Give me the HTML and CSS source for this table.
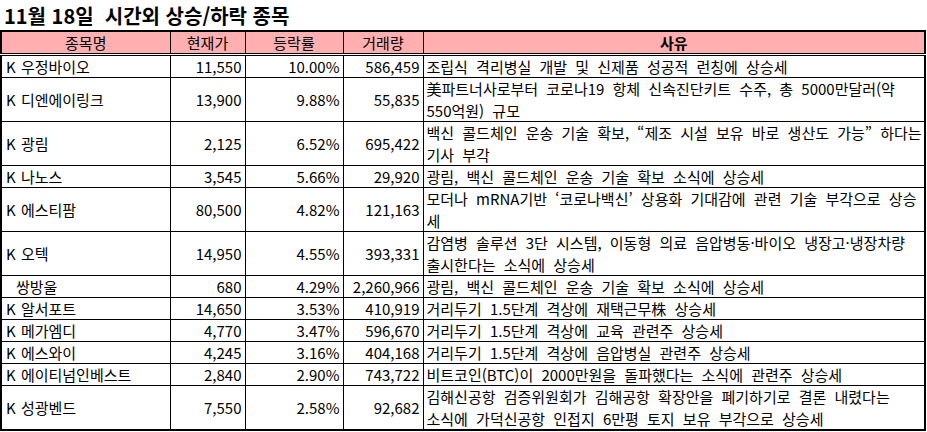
FILE: index.html
```html
<!DOCTYPE html>
<html lang="ko">
<head>
<meta charset="utf-8">
<title>시간외 상승/하락 종목</title>
<link rel="stylesheet" href="styles.css">
</head>
<body>
<div class="title">11월 18일  시간외 상승/하락 종목</div>
<table class="grid">
  <colgroup>
    <col class="c-name"><col class="c-price"><col class="c-rate"><col class="c-vol"><col class="c-reason">
  </colgroup>
  <thead>
    <tr class="head">
      <th>종목명</th><th>현재가</th><th>등락률</th><th>거래량</th><th class="bold">사유</th>
    </tr>
  </thead>
  <tbody>
    <tr><td class="name">K 우정바이오</td><td class="num">11,550</td><td class="num">10.00%</td><td class="num">586,459</td><td class="why">조립식 격리병실 개발 및 신제품 성공적 런칭에 상승세</td></tr>
    <tr class="two"><td class="name">K 디엔에이링크</td><td class="num">13,900</td><td class="num">9.88%</td><td class="num">55,835</td><td class="why">美파트너사로부터 코로나19 항체 신속진단키트 수주, 총 5000만달러(약<br>550억원) 규모</td></tr>
    <tr class="two"><td class="name">K 광림</td><td class="num">2,125</td><td class="num">6.52%</td><td class="num">695,422</td><td class="why">백신 콜드체인 운송 기술 확보, “제조 시설 보유 바로 생산도 가능” 하다는<br>기사 부각</td></tr>
    <tr><td class="name">K 나노스</td><td class="num">3,545</td><td class="num">5.66%</td><td class="num">29,920</td><td class="why">광림, 백신 콜드체인 운송 기술 확보 소식에 상승세</td></tr>
    <tr class="two"><td class="name">K 에스티팜</td><td class="num">80,500</td><td class="num">4.82%</td><td class="num">121,163</td><td class="why">모더나 mRNA기반 ‘코로나백신’ 상용화 기대감에 관련 기술 부각으로 상승<br>세</td></tr>
    <tr class="two"><td class="name">K 오텍</td><td class="num">14,950</td><td class="num">4.55%</td><td class="num">393,331</td><td class="why">감염병 솔루션 3단 시스템, 이동형 의료 음압병동·바이오 냉장고·냉장차량<br>출시한다는 소식에 상승세</td></tr>
    <tr><td class="name"><span class="indent">쌍방울</span></td><td class="num">680</td><td class="num">4.29%</td><td class="num">2,260,966</td><td class="why">광림, 백신 콜드체인 운송 기술 확보 소식에 상승세</td></tr>
    <tr><td class="name">K 알서포트</td><td class="num">14,650</td><td class="num">3.53%</td><td class="num">410,919</td><td class="why">거리두기 1.5단계 격상에 재택근무株 상승세</td></tr>
    <tr><td class="name">K 메가엠디</td><td class="num">4,770</td><td class="num">3.47%</td><td class="num">596,670</td><td class="why">거리두기 1.5단계 격상에 교육 관련주 상승세</td></tr>
    <tr><td class="name">K 에스와이</td><td class="num">4,245</td><td class="num">3.16%</td><td class="num">404,168</td><td class="why">거리두기 1.5단계 격상에 음압병실 관련주 상승세</td></tr>
    <tr><td class="name">K 에이티넘인베스트</td><td class="num">2,840</td><td class="num">2.90%</td><td class="num">743,722</td><td class="why">비트코인(BTC)이 2000만원을 돌파했다는 소식에 관련주 상승세</td></tr>
    <tr class="two last"><td class="name">K 성광벤드</td><td class="num">7,550</td><td class="num">2.58%</td><td class="num">92,682</td><td class="why">김해신공항 검증위원회가 김해공항 확장안을 폐기하기로 결론 내렸다는<br>소식에 가덕신공항 인접지 6만평 토지 보유 부각으로 상승세</td></tr>
  </tbody>
</table>
</body>
</html>
```

FILE: styles.css
```css
html, body {
  margin: 0;
  padding: 0;
  background: #ffffff;
  color: #000000;
  font-family: "Noto Sans CJK KR", "Noto Sans", sans-serif;
}

.title {
  height: 30px;
  line-height: 32px;
  padding-left: 4px;
  font-size: 20px;
  font-weight: bold;
  white-space: pre;
}

.grid {
  border-collapse: collapse;
  table-layout: fixed;
  width: 926px;
  border: 2px solid #000;
  font-size: 15px;
}

.c-name { width: 169px; }
.c-price { width: 75px; }
.c-rate { width: 98px; }
.c-vol { width: 80px; }
.c-reason { width: 502px; }

.grid th,
.grid td {
  border: 1px solid #000;
  padding: 0;
  line-height: 21px;
  white-space: nowrap;
  overflow: hidden;
  vertical-align: middle;
}

.grid th {
  background: #ffafaf;
  font-weight: normal;
  text-align: center;
  border-bottom: 3px double #000;
}

.grid th.bold {
  font-weight: bold;
}

.grid tr.two td {
  line-height: 21.5px;
}

.grid td.name {
  padding-left: 4px;
  word-spacing: 1px;
}

.grid td.num {
  text-align: right;
  padding-right: 3px;
}

.grid td.why {
  padding-left: 3px;
  word-spacing: 4px;
}

.indent {
  padding-left: 10px;
}
```
